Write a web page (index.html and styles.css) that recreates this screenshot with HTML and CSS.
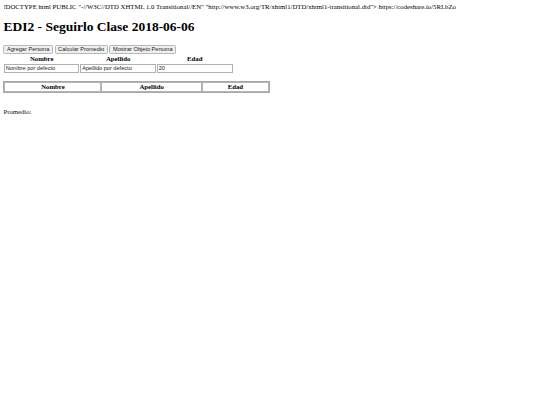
FILE: index.html
```html
<!DOCTYPE html>
<html>
<head>
<meta charset="utf-8">
<title>EDI2</title>
<link rel="stylesheet" href="styles.css">
</head>
<body>
<div class="doctype">!DOCTYPE html PUBLIC "-//W3C//DTD XHTML 1.0 Transitional//EN" "http://www.w3.org/TR/xhtml1/DTD/xhtml1-transitional.dtd"&gt; https://codeshare.io/5RLbZo</div>
<h1 class="title">EDI2 - Seguirlo Clase 2018-06-06</h1>
<div class="actions">
<button class="btn">Agregar Persona</button>
<button class="btn">Calcular Promedio</button>
<button class="btn">Mostrar Objeto Persona</button>
</div>
<table class="form">
<tr><th>Nombre</th><th>Apellido</th><th>Edad</th></tr>
<tr>
<td><input class="field" type="text" value="Nombre por defecto"></td>
<td><input class="field" type="text" value="Apellido por defecto"></td>
<td><input class="field" type="text" value="20"></td>
</tr>
</table>
<br>
<table class="list">
<tr><th>Nombre</th><th>Apellido</th><th>Edad</th></tr>
</table>
<p class="avg">Promedio:</p>
</body>
</html>
```
FILE: styles.css
```css
html { zoom: 0.422; }
body {
  margin: 8px;
  font-family: "Liberation Serif", serif;
  font-size: 16px;
  color: #000;
  background: #fff;
}
.doctype {
  white-space: nowrap;
}
.title {
  font-size: 32px;
  margin: 21px 0 22px;
}
.btn {
  font-family: "Liberation Sans", sans-serif;
  font-size: 13.33px;
  color: #222;
  background: #efefef;
  border: 2px solid #b8b8b8;
  border-radius: 3px;
  padding: 2px 6px;
}
.form th {
  padding: 2px 1px 3px;
}
.field {
  font-family: "Liberation Sans", sans-serif;
  font-size: 13.33px;
  color: #222;
  border: 2px solid #b0b0b0;
  padding: 2px 2px;
  height: 22px;
  box-sizing: border-box;
}
.list {
  width: 50%;
  border: 2px solid #a8a8a8;
  border-spacing: 2px;
  margin-top: 1px;
}
.list th {
  border: 2px solid #b4b4b4;
  padding: 1px 1px;
}
.avg {
  margin: 37px 0 16px;
  color: #111;
}
```
